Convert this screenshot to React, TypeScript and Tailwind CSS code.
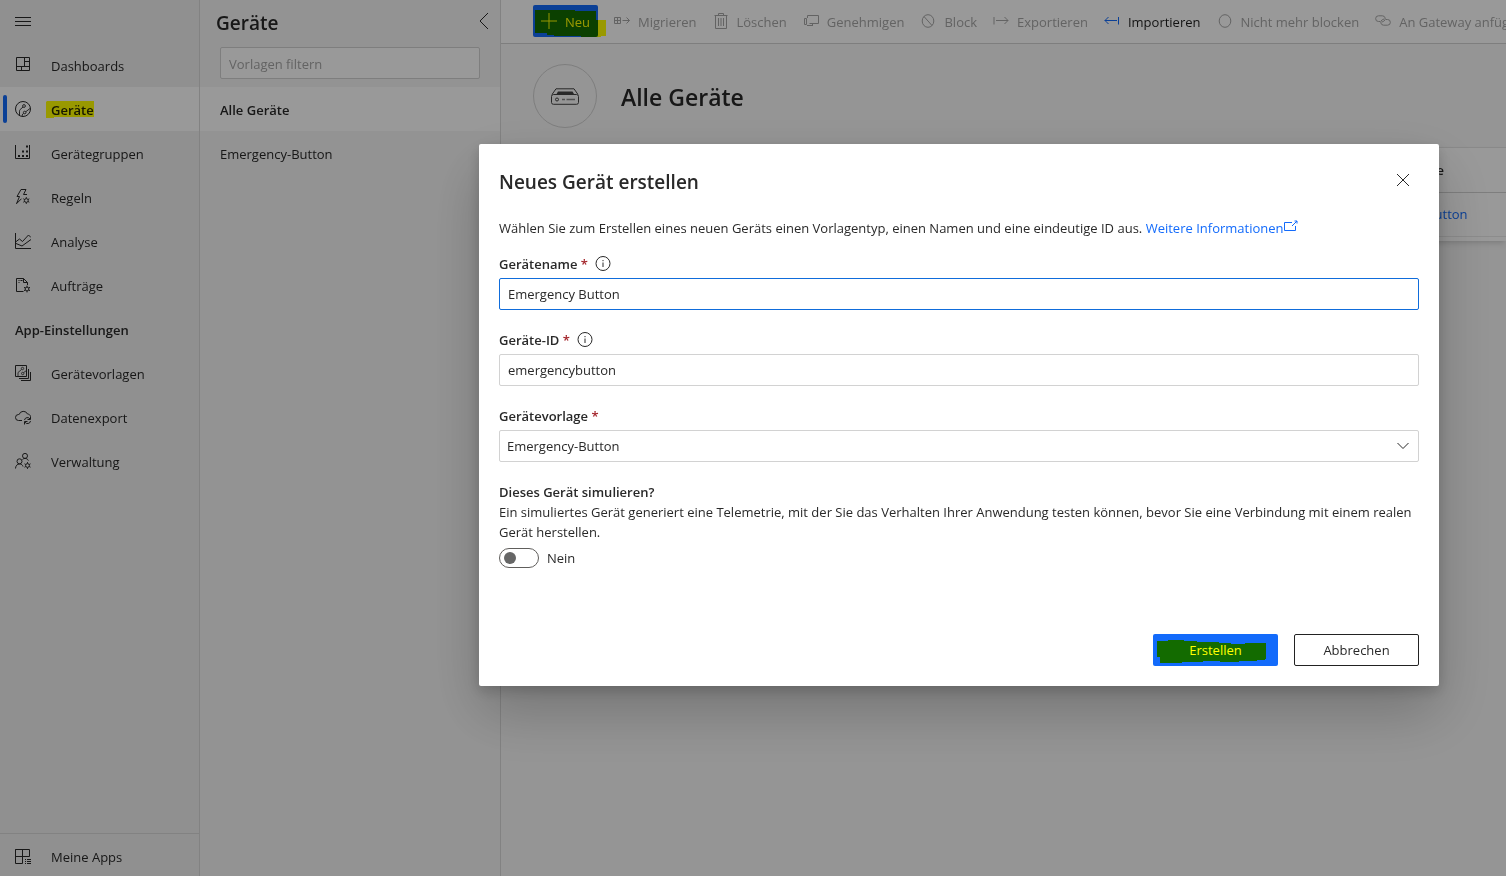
import type { ReactNode } from "react";

type IconProps = { children: ReactNode; className?: string };

function Icon({ children, className = "" }: IconProps) {
  return (
    <svg
      viewBox="0 0 16 16"
      fill="none"
      stroke="currentColor"
      strokeWidth="1"
      aria-hidden="true"
      className={`size-4 shrink-0 ${className}`}
    >
      {children}
    </svg>
  );
}

const gear = (cx: number, cy: number) => (
  <>
    <circle cx={cx} cy={cy} r="1.9" />
    <path
      d={`M${cx} ${cy - 3.4}v1.4M${cx} ${cy + 2}v1.4M${cx - 3} ${cy - 1.7}l1.3 .7M${cx + 1.7} ${cy + 1}l1.3 .7M${cx - 3} ${cy + 1.7}l1.3 -.7M${cx + 1.7} ${cy - 1}l1.3 -.7`}
    />
  </>
);

const icons = {
  dashboards: <path d="M1.500.5h13v13h-13zM9.500.5v9M9.500 4.500h5M1.500 9.500h13M6.500 9.500v4" />,
  devices: (
    <>
      <circle cx="8" cy="8" r="7.500" />
      <path d="M4.500 14.300V10.200q0-1 .7-1.700L8 6M7.300 15.300v-1q0-1.500 1.400-2M15 7.500l-4.300 3.300" strokeWidth=".9" />
      <circle cx="9" cy="5" r="1.400" strokeWidth=".9" />
      <circle cx="9.700" cy="11.500" r="1.300" strokeWidth=".9" />
    </>
  ),
  groups: (
    <>
      <path d="M.5 0v13.500h14V0" />
      <g fill="currentColor" stroke="none">
        <path d="M3 10h2v2H3zM7 10h2v2H7zM11 10h2v2h-2zM7 5.500h2v2H7zM11 5.500h2v2h-2zM11 .500h2v2h-2z" />
      </g>
    </>
  ),
  rules: (
    <>
      <path d="M6 .5h5L8.500 5.500h3.500M6 .5L2 7.500h2.500L1.500 14.700l5-5" />
      {gear(11.3, 11.5)}
    </>
  ),
  analytics: (
    <>
      <path d="M.5 0v15.500H16" />
      <path d="M.5 9l4-3 3 2.500L13.500 2l2.500 2.500M1 10.500l6 2.500 9-6.500" />
    </>
  ),
  jobs: (
    <>
      <path d="M8.500 14.500h-7V1.500h7l4 4V8M8.500 1.500v4h4" />
      <path d="M3.500 3.500h1M5.500 3.500h2M3.500 5.500h1" />
      {gear(12, 12)}
    </>
  ),
  templates: (
    <>
      <path d="M.5.5h11v11H.500zM13.500 4v9.500H4M15.500 7v8.500H6" />
      <circle cx="7.500" cy="3.500" r="1.200" strokeWidth=".8" />
      <circle cx="7.700" cy="8.500" r="1.200" strokeWidth=".8" />
      <path d="M3 11V7.500l3.500-3M8.700 7.500L11.500 5.500" strokeWidth=".8" />
    </>
  ),
  exportData: (
    <>
      <path d="M7 11.500H3.500a3 3 0 0 1 0-6h.6A4.500 4.500 0 0 1 12.500 5c1.700.1 2.700 1 3 2.500" />
      <path d="M9.500 11a3 3 0 0 1 5.500-1M15.500 7.500V10.500h-3M15.500 12a3 3 0 0 1-5.500 1.200M9.500 15.500v-3h3" />
    </>
  ),
  admin: (
    <>
      <circle cx="10" cy="2.900" r="2.500" />
      <circle cx="4.500" cy="8.300" r="2.500" />
      <path d="M.5 15.500c.2-2.800 1.700-4.500 4-4.500 1.800 0 3 .8 3.500 2.500M7.500 6.500c.8-.8 1.500-1.100 2.500-1.100 1.700 0 2.800.9 3.400 2.200" />
      {gear(12.5, 12.5)}
    </>
  ),
  apps: (
    <>
      <path d="M.5.5h14v7H.500zM7.500.5v14h-7V.5" />
      <path d="M10 10.500h1M12 10.500h4M10 12.500h1M12 12.500h4M10 14.500h1M12 14.500h4" />
    </>
  ),
  migrate: (
    <>
      <path d="M.5 4.500h6v6h-6zM.5 7.500h6M3.500 4.500v6" />
      <path d="M8.500 7.500h7M12.500 4.500l3 3-3 3" />
    </>
  ),
  trash: <path d="M1.500 2.500h13M5.500 2.500v-2h5v2M2.500 2.500v13h11v-13M5.500 5v8M8 5v8M10.500 5v8" />,
  approve: <path d="M4.500 5V2.500h11v8h-9M1.500 5.500h2v6h-2zM4 12.500h6M9.500 10.500v2" />,
  block: (
    <>
      <ellipse cx="8" cy="8" rx="5.800" ry="6.300" />
      <path d="M4 3.500l8 9" />
    </>
  ),
  exportArrow: <path d="M1 4v7.500M3 7.500h12M11.500 4l3.500 3.500-3.500 3.500" />,
  importArrow: <path d="M14.500 4v7.500M.8 7.500H13M4.500 4L1 7.500 4.500 11" />,
  unblock: <ellipse cx="8" cy="8" rx="5.800" ry="6.300" />,
  link: (
    <path d="M5 8.500H3.500a2.800 2.800 0 0 1 0-5.700h3.800a2.900 2.900 0 0 1 1.500 5.400L7 9M11 6.500h1.500a2.800 2.800 0 0 1 0 5.700H8.700a2.900 2.900 0 0 1-1.500-5.400L9 6" />
  ),
};

type NavEntry = { label: string; icon: ReactNode; active?: boolean };

const mainNav: NavEntry[] = [
  { label: "Dashboards", icon: icons.dashboards },
  { label: "Geräte", icon: icons.devices, active: true },
  { label: "Gerätegruppen", icon: icons.groups },
  { label: "Regeln", icon: icons.rules },
  { label: "Analyse", icon: icons.analytics },
  { label: "Aufträge", icon: icons.jobs },
];

const settingsNav: NavEntry[] = [
  { label: "Gerätevorlagen", icon: icons.templates },
  { label: "Datenexport", icon: icons.exportData },
  { label: "Verwaltung", icon: icons.admin },
];

const commands = [
  { label: "Migrieren", icon: icons.migrate },
  { label: "Löschen", icon: icons.trash },
  { label: "Genehmigen", icon: icons.approve },
  { label: "Block", icon: icons.block },
  { label: "Exportieren", icon: icons.exportArrow },
  { label: "Importieren", icon: icons.importArrow, enabled: true },
  { label: "Nicht mehr blocken", icon: icons.unblock },
  { label: "An Gateway anfügen", icon: icons.link },
];

function NavLink({ label, icon, active }: NavEntry) {
  return (
    <a
      href="#"
      aria-current={active ? "page" : undefined}
      className={`flex h-11 items-center ${active ? "bg-white font-semibold" : ""}`}
    >
      <span className={`ml-[3px] mr-2 h-7 w-1 rounded-sm ${active ? "bg-[#136bfb]" : ""}`} />
      <Icon>{icon}</Icon>
      <span className="relative ml-5 pt-1">
        {label}
        {active && (
          <svg
            viewBox="0 0 48 17"
            aria-hidden="true"
            className="absolute -left-[5px] top-1 h-[17px] w-12 mix-blend-multiply"
          >
            <path d="M1 0h47v16H8v1H0V1z" fill="#ff0" />
          </svg>
        )}
      </span>
    </a>
  );
}

function Sidebar() {
  return (
    <nav className="flex w-50 shrink-0 flex-col border-r border-[#d9d9d9] bg-[#f0f0f0]">
      <button type="button" aria-label="Menü" className="flex h-[43px] items-center pl-[15px]">
        <Icon>
          <path d="M0 3.500h16M0 7.500h16M0 11.500h16" />
        </Icon>
      </button>
      {mainNav.map((n) => (
        <NavLink key={n.label} {...n} />
      ))}
      <h2 className="flex h-11 items-center pl-[15px] pt-1 font-semibold">App-Einstellungen</h2>
      {settingsNav.map((n) => (
        <NavLink key={n.label} {...n} />
      ))}
      <a href="#" className="mt-auto flex h-[43px] items-center border-t border-[#d9d9d9] pl-[15px] pt-1">
        <Icon>{icons.apps}</Icon>
        <span className="ml-5 pt-0.5">Meine Apps</span>
      </a>
    </nav>
  );
}

function TemplatePanel() {
  return (
    <aside className="flex w-[301px] shrink-0 flex-col border-r border-[#d9d9d9] bg-[#f6f6f6]">
      <div className="flex h-[47px] items-center justify-between pl-4 pr-2">
        <h2 className="text-[19px] font-semibold">Geräte</h2>
        <button type="button" aria-label="Bereich einklappen" className="pb-1.5">
          <Icon>
            <path d="M12 0L4 8l8 8" />
          </Icon>
        </button>
      </div>
      <input
        type="text"
        aria-label="Vorlagen filtern"
        placeholder="Vorlagen filtern"
        className="mx-5 h-8 rounded-xs border border-[#d2d2d2] bg-white px-2 pt-0.5 placeholder:text-[#a6a6a6]"
      />
      <a href="#" className="mt-2 flex h-11 items-center bg-white pl-5 pt-1 font-semibold">
        Alle Geräte
      </a>
      <a href="#" className="flex h-11 items-center pl-5 pt-1">
        Emergency-Button
      </a>
    </aside>
  );
}

function DeviceArea() {
  return (
    <main className="min-w-0 flex-1 overflow-hidden bg-[#f8f8f8]">
      <div className="flex h-11 items-center gap-4 whitespace-nowrap border-b border-[#d2d2d2] bg-white pb-px pl-8">
        <button
          type="button"
          className="relative flex h-8 w-[65px] shrink-0 items-center gap-2 rounded-xs bg-[#136bfb] pl-2 text-white"
        >
          <Icon>
            <path d="M8 0v16M0 8h16" />
          </Icon>
          <span className="pt-1">Neu</span>
          <svg
            viewBox="0 0 71 27"
            aria-hidden="true"
            className="absolute left-[2px] top-[5px] h-[27px] w-[71px] mix-blend-multiply"
          >
            <path d="M0 0h40v1h21v9h10v16h-5v1H46v-1H19v-1h-7v-2H0z" fill="#ff0" />
          </svg>
        </button>
        {commands.map((c) => (
          <button
            key={c.label}
            type="button"
            disabled={!c.enabled}
            className={`flex shrink-0 items-center gap-2 ${c.enabled ? "text-[#1f1f1f]" : "text-[#a6a6a6]"}`}
          >
            <Icon className={c.enabled ? "text-[#136bfb]" : ""}>{c.icon}</Icon>
            <span className="pt-1">{c.label}</span>
          </button>
        ))}
      </div>
      <header className="mt-5 flex items-center gap-6 pl-8">
        <span className="flex size-16 items-center justify-center rounded-full border border-[#d2d2d2]">
          <svg viewBox="0 0 28 17" fill="none" stroke="#444" aria-hidden="true" className="h-[17px] w-7">
            <path d="M1 6.500L5 .8h18l4 5.700M2.500 6.500h23q2 0 2 2v6q0 1.800-2 1.800h-23q-2 0-2-1.800v-6q0-2 2-2z" />
            <path d="M7 3.500h14.500l1.800 3h-18z" fill="#444" stroke="none" />
            <circle cx="6" cy="11.500" r="1.500" />
            <path d="M11 11.500h3M15.500 11.500h8.500" stroke="#888" strokeWidth="1.500" />
          </svg>
        </span>
        <h1 className="pt-0.5 text-[23px] font-semibold">Alle Geräte</h1>
      </header>
      <div className="ml-8 mt-[19px] border-t border-[#e4e4e4] bg-white pb-1 shadow-md">
        <table className="w-full table-fixed text-left">
          <thead>
            <tr className="h-11 border-b border-[#d2d2d2]">
              <td className="w-[822px]" />
              <th scope="col" className="pt-0.5 font-semibold">
                Gerätevorlage
              </th>
            </tr>
          </thead>
          <tbody>
            <tr className="h-11 border-b border-[#e9e9e9]">
              <td />
              <td className="pt-0.5">
                <a href="#" className="text-[#136bfb]">
                  Emergency-Button
                </a>
              </td>
            </tr>
          </tbody>
        </table>
      </div>
    </main>
  );
}

function InfoIcon() {
  return (
    <Icon className="ml-[7px]">
      <circle cx="8" cy="7.500" r="7" />
      <path d="M8 6.500v4.500M8 4v1.200" />
    </Icon>
  );
}

type LabelProps = { id: string; text: string; info?: boolean };

function FieldLabel({ id, text, info }: LabelProps) {
  return (
    <div className="flex h-5 items-center">
      <label htmlFor={id} className="pt-0.5 font-semibold">
        {text} <span className="text-[#a4262c]">*</span>
      </label>
      {info && <InfoIcon />}
    </div>
  );
}

function CreateDialog() {
  return (
    <div
      role="dialog"
      aria-modal="true"
      aria-labelledby="dialog-title"
      className="flex h-[542px] w-full max-w-[960px] flex-col rounded-xs bg-white p-5 shadow-[0_26px_58px_rgba(0,0,0,0.22),0_5px_14px_rgba(0,0,0,0.18)]"
    >
      <div className="flex h-9 items-start justify-between">
        <h2 id="dialog-title" className="text-[19px] leading-9 font-semibold">
          Neues Gerät erstellen
        </h2>
        <button type="button" aria-label="Schließen" className="flex size-8 items-center justify-center">
          <Icon>
            <path d="M2 2l12 12M14 2L2 14" />
          </Icon>
        </button>
      </div>
      <p className="mt-[18px] leading-5">
        Wählen Sie zum Erstellen eines neuen Geräts einen Vorlagentyp, einen Namen und eine eindeutige ID aus.{" "}
        <a href="#" className="text-[#136bfb]">
          Weitere Informationen
          <svg
            viewBox="0 0 14 12"
            fill="none"
            stroke="currentColor"
            aria-hidden="true"
            className="inline h-3 w-3.5 align-text-top"
          >
            <path d="M8 3.500H.5v8h11V7M8 7L13 2M10.500 2h2.500v2.500" />
          </svg>
        </a>
      </p>
      <div className="mt-4">
        <FieldLabel id="device-name" text="Gerätename" info />
        <input
          id="device-name"
          type="text"
          defaultValue="Emergency Button"
          className="mt-1 h-8 w-full rounded-xs border border-[#0f6cdb] px-2 outline-none"
        />
      </div>
      <div className="mt-5">
        <FieldLabel id="device-id" text="Geräte-ID" info />
        <input
          id="device-id"
          type="text"
          defaultValue="emergencybutton"
          className="mt-1 h-8 w-full rounded-xs border border-[#d2d2d2] px-2 outline-none"
        />
      </div>
      <div className="mt-5">
        <FieldLabel id="device-template" text="Gerätevorlage" />
        <div className="relative mt-1">
          <select
            id="device-template"
            className="h-8 w-full appearance-none rounded-xs border border-[#d2d2d2] bg-white px-[7px] pt-0.5 outline-none"
          >
            <option>Emergency-Button</option>
          </select>
          <svg
            viewBox="0 0 12 8"
            fill="none"
            stroke="currentColor"
            aria-hidden="true"
            className="pointer-events-none absolute right-[10px] top-3 h-2 w-3"
          >
            <path d="M.5 1L6 6.500 11.500 1" />
          </svg>
        </div>
      </div>
      <div className="mt-5 leading-5">
        <label htmlFor="simulate" className="block font-semibold">
          Dieses Gerät simulieren?
        </label>
        <p id="simulate-help">
          Ein simuliertes Gerät generiert eine Telemetrie, mit der Sie das Verhalten Ihrer Anwendung testen können,
          bevor Sie eine Verbindung mit einem realen Gerät herstellen.
        </p>
        <div className="mt-[6px] flex items-center gap-2">
          <input
            id="simulate"
            type="checkbox"
            role="switch"
            aria-describedby="simulate-help"
            className="flex h-5 w-10 appearance-none items-center rounded-full border border-[#605e5c] pl-1 before:size-3 before:rounded-full before:bg-[#666] before:content-['']"
          />
          <span>Nein</span>
        </div>
      </div>
      <div className="mt-auto flex justify-end gap-4">
        <button type="button" className="relative h-8 w-[125px] rounded-xs bg-[#136bfb] pt-0.5 text-white">
          Erstellen
          <svg
            viewBox="0 0 109 23"
            aria-hidden="true"
            className="absolute left-1 top-[6px] h-[23px] w-[109px] mix-blend-multiply"
          >
            <path
              d="M0 1h11V0h16v1h13v1h22v1h12v1h14V3h21v16h-1v1h-8v1H82v1H63v-1H46v1H25v1H3v-6H0z"
              fill="#ff0"
            />
          </svg>
        </button>
        <button type="button" className="h-8 w-[125px] rounded-xs border border-[#222] pt-0.5">
          Abbrechen
        </button>
      </div>
    </div>
  );
}

export default function App() {
  return (
    <div className="flex h-screen overflow-hidden font-['Open_Sans',sans-serif] text-[13px] text-[#292929]">
      <Sidebar />
      <TemplatePanel />
      <DeviceArea />
      <div className="fixed inset-0 flex items-start justify-end bg-black/40 pr-[67px] pt-36">
        <CreateDialog />
      </div>
    </div>
  );
}
